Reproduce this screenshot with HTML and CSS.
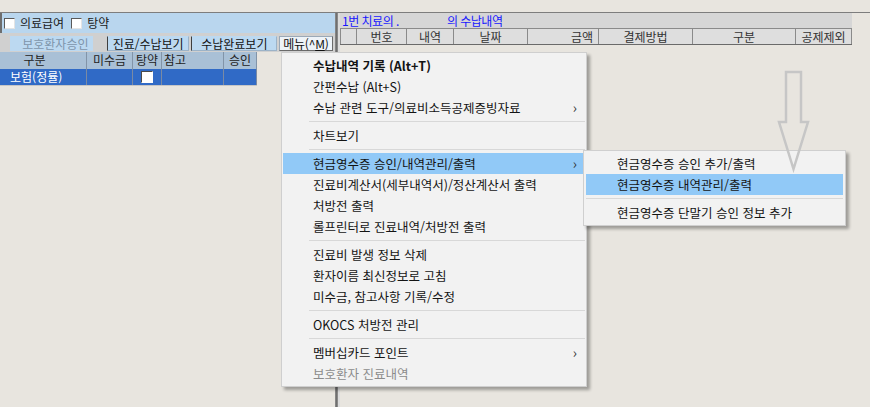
FILE: index.html
```html
<!DOCTYPE html>
<html lang="ko">
  <head>
    <meta charset="UTF-8" />
    <title>수납내역</title>
    <link rel="stylesheet" href="styles.css">
  </head>
  <body>
    <div class="top"></div>
    <div class="panes">
      <div class="left">
        <div class="opts">
          <label class="opt"><span class="cb"></span>의료급여</label>
          <label class="opt"><span class="cb"></span>탕약</label>
        </div>
        <div class="btnbar">
          <span class="btn btn-off">보호환자승인</span>
          <span class="btn btn-first">진료/수납보기</span>
          <span class="btn">수납완료보기</span>
          <span class="btn btn-menu">메뉴(^<u>M</u>)</span>
        </div>
        <div class="grid">
          <div class="row head">
            <span class="c1">구분</span>
            <span class="c2">미수금</span>
            <span class="c3">탕약</span>
            <span class="c4">참고</span>
            <span class="c5">승인</span>
          </div>
          <div class="row sel">
            <span class="c1">보험(정률)</span>
            <span class="c2"></span>
            <span class="c3"><i class="cbw"></i></span>
            <span class="c4"></span>
            <span class="c5"></span>
          </div>
        </div>
      </div>
      <div class="split"></div>
      <div class="right">
        <div class="title">1번 치료의 .<span class="blank"></span>의 수납내역</div>
        <div class="thead">
          <span class="h0"></span>
          <span class="h1">번호</span>
          <span class="h2">내역</span>
          <span class="h3">날짜</span>
          <span class="h4">금액</span>
          <span class="h5">결제방법</span>
          <span class="h6">구분</span>
          <span class="h7">공제제외</span>
        </div>
      </div>
    </div>

    <div class="menu">
      <div class="item bold">수납내역 기록 (Alt+T)</div>
      <div class="item">간편수납 (Alt+S)</div>
      <div class="item more">수납 관련 도구/의료비소득공제증빙자료</div>
      <div class="sep"></div>
      <div class="item">차트보기</div>
      <div class="sep"></div>
      <div class="item more on">현금영수증 승인/내역관리/출력</div>
      <div class="item">진료비계산서(세부내역서)/정산계산서 출력</div>
      <div class="item">처방전 출력</div>
      <div class="item">롤프린터로 진료내역/처방전 출력</div>
      <div class="sep"></div>
      <div class="item">진료비 발생 정보 삭제</div>
      <div class="item">환자이름 최신정보로 고침</div>
      <div class="item">미수금, 참고사항 기록/수정</div>
      <div class="sep"></div>
      <div class="item">OKOCS 처방전 관리</div>
      <div class="sep"></div>
      <div class="item more">멤버십카드 포인트</div>
      <div class="item off">보호환자 진료내역</div>
    </div>

    <div class="menu sub">
      <div class="item">현금영수증 승인 추가/출력</div>
      <div class="item on">현금영수증 내역관리/출력</div>
      <div class="sep"></div>
      <div class="item">현금영수증 단말기 승인 정보 추가</div>
    </div>

    <svg class="arrow" width="36" height="104" viewBox="776 70 36 104">
      <polygon points="786,72 801,72 801,122 808,122 793.5,169 779,122 786,122" />
    </svg>
  </body>
</html>
```

FILE: styles.css
```css
body {
  margin: 0;
  width: 870px;
  height: 407px;
  overflow: hidden;
  background: #e8e5df;
  font-family: "Noto Sans CJK KR", "Noto Sans", sans-serif;
  font-size: 12px;
  color: #1a1a1a;
}

.top {
  height: 12px;
  border-bottom: 1px solid #7d7d7d;
}

.panes {
  display: flex;
  height: 394px;
}

.left {
  width: 335px;
}

.opts {
  display: flex;
  align-items: center;
  gap: 7px;
  height: 20px;
  padding-left: 2px;
  border-left: 2px solid #6e6e6e;
  background: #b9d6ee;
}

.opt {
  display: flex;
  align-items: center;
  gap: 5px;
  line-height: 14px;
}

.cb {
  width: 9px;
  height: 9px;
  background: #fff;
  border: 1px solid;
  border-color: #5a5a5a #e4e4e4 #e4e4e4 #5a5a5a;
}

.btnbar {
  display: flex;
  height: 19px;
  padding: 3px 0 0 10px;
  box-sizing: border-box;
  background: #d0d0d0;
}

.btn {
  height: 15px;
  line-height: 13px;
  padding: 0;
  margin-right: 2px;
  box-sizing: border-box;
  background: #bcd9f1;
  border: 1px solid;
  border-color: #bcd9f1 #9cb3c8 #9cb3c8 #3f3f3f;
  text-align: center;
  white-space: nowrap;
  color: #111;
}

.btn-off {
  width: 83px;
  margin-right: 14px;
  padding-left: 8px;
  color: #7e95ab;
  border-color: #bcd9f1;
}

.btn-first {
  width: 83px;
}

.btn:nth-child(3) {
  width: 86px;
}

.btn-menu {
  width: 54px;
  background: #eef3f8;
  border-color: #9aa9b8 #6a6a6a #6a6a6a #9aa9b8;
  text-align: left;
  padding-left: 3px;
  letter-spacing: -0.2px;
}

.grid {
  width: 257px;
}

.row {
  display: grid;
  grid-template-columns: 87px 46px 29px 62px 33px;
}

.row span {
  border-right: 1px solid #8294a8;
  overflow: hidden;
  white-space: nowrap;
}

.head {
  height: 17px;
  line-height: 16px;
  background: #a9c0d6;
  color: #222;
  text-align: center;
}

.head .c1 {
  padding-right: 17px;
}

.head .c4 {
  text-align: left;
  padding-left: 2px;
}

.sel {
  height: 16px;
  line-height: 15px;
  background: #306ac6;
  color: #fff;
  border-bottom: 1px solid #c6c6c6;
}

.sel span {
  border-right-color: #7a8aa3;
}

.sel .c1 {
  padding-left: 10px;
}

.sel .c3 {
  display: flex;
  justify-content: center;
  align-items: center;
}

.cbw {
  width: 10px;
  height: 10px;
  background: #fff;
  border: 1px solid;
  border-color: #4a4a4a #fff #fff #4a4a4a;
}

.split {
  width: 5px;
  background: linear-gradient(to right, #9c9c9c 0, #6e6e6e 1px, #707070 2px, #a2a2a2 3px, #dcdcdc 3px, #dcdcdc 5px);
}

.right {
  width: 512px;
  height: 32px;
}

.title {
  height: 15px;
  line-height: 15px;
  padding-left: 2px;
  background: #d6d6d6;
  color: #1616ff;
  letter-spacing: -0.5px;
}

.blank {
  display: inline-block;
  width: 48px;
}

.thead {
  display: flex;
  height: 17px;
  line-height: 15px;
  background: #dedede;
  color: #333;
  border-top: 1px solid #8a8a8a;
  border-bottom: 1px solid #6a6a6a;
  box-sizing: border-box;
}

.thead span {
  border-left: 1px solid #8a8a8a;
  text-align: center;
  box-sizing: border-box;
}

.h0 { width: 16px; }
.h1 { width: 50px; }
.h2 { width: 47px; }
.h3 { width: 74px; }
.h4 { width: 71px; text-align: right !important; padding-right: 5px; }
.h5 { width: 94px; }
.h6 { width: 103px; }
.h7 { width: 57px; border-right: 1px solid #8a8a8a; }

.menu {
  position: absolute;
  left: 281px;
  top: 52px;
  width: 306px;
  box-sizing: border-box;
  padding: 2px 3px 2px 1px;
  background: #f2f2f2;
  border: 1px solid #cfcfcf;
  box-shadow: 3px 3px 3px rgba(0, 0, 0, 0.32);
  font-size: 12.5px;
  color: #141414;
}

.item {
  position: relative;
  height: 21px;
  line-height: 21px;
  padding-left: 30px;
  white-space: nowrap;
}

.item.bold {
  font-weight: bold;
}

.item.on {
  background: #91c9f7;
}

.item.off {
  color: #8b8b8b;
}

.item.more::after {
  content: '›';
  position: absolute;
  right: 6px;
  top: 0;
  font-size: 14px;
  color: #333;
}

.sep {
  height: 1px;
  margin: 3px -2px 3px 26px;
  background: #d8d8d8;
}

.sub {
  left: 583px;
  top: 150px;
  width: 263px;
  padding: 2px 2px 2px 2px;
}

.sub .item {
  padding-left: 31px;
}

.sub .sep {
  margin: 3px 0;
}

.arrow {
  position: absolute;
  left: 776px;
  top: 70px;
}

.arrow polygon {
  fill: none;
  stroke: #c6c6c6;
  stroke-width: 2.5;
}
```
